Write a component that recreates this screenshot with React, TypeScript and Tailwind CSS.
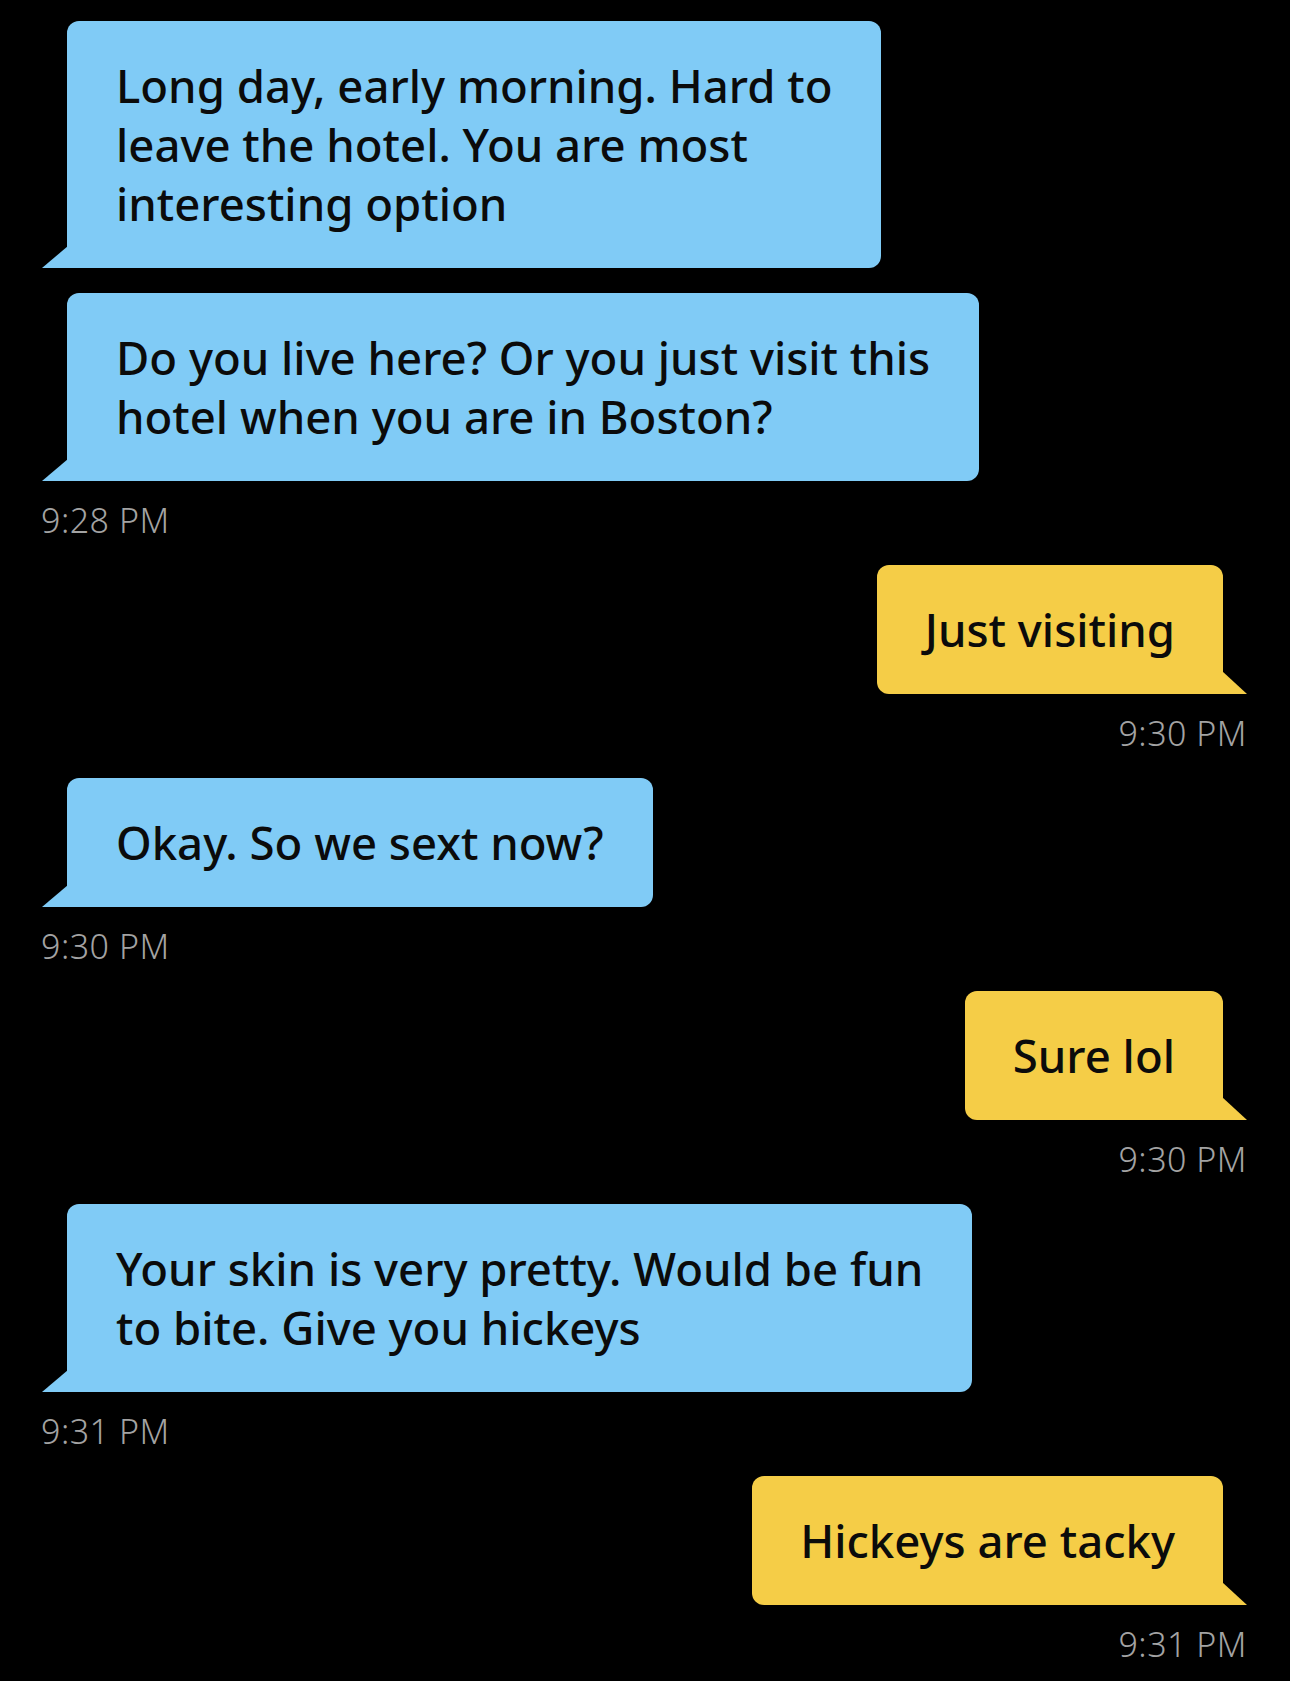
import React from "react";

type Msg = { from: "them" | "me"; lines: string[] };
type Group = { from: "them" | "me"; messages: string[][]; time: string };

const groups: Group[] = [
  {
    from: "them",
    messages: [
      [
        "Long day, early morning. Hard to",
        "leave the hotel. You are most",
        "interesting option",
      ],
      ["Do you live here? Or you just visit this", "hotel when you are in Boston?"],
    ],
    time: "9:28 PM",
  },
  { from: "me", messages: [["Just visiting"]], time: "9:30 PM" },
  { from: "them", messages: [["Okay. So we sext now?"]], time: "9:30 PM" },
  { from: "me", messages: [["Sure lol"]], time: "9:30 PM" },
  {
    from: "them",
    messages: [["Your skin is very pretty. Would be fun", "to bite. Give you hickeys"]],
    time: "9:31 PM",
  },
  { from: "me", messages: [["Hickeys are tacky"]], time: "9:31 PM" },
];

const Tail = ({ side }: { side: "them" | "me" }) =>
  side === "them" ? (
    <svg
      className="absolute bottom-0 -left-[25px] h-[22px] w-[26px]"
      viewBox="0 0 26 22"
    >
      <polygon points="26,0 26,22 0,22" fill="#80cbf6" />
    </svg>
  ) : (
    <svg
      className="absolute bottom-0 -right-[24px] h-[23px] w-[25px]"
      viewBox="0 0 25 23"
    >
      <polygon points="0,0 0,23 25,23" fill="#f5cd47" />
    </svg>
  );

const Bubble = ({ from, lines }: Msg) => {
  const them = from === "them";
  return (
    <div
      className={
        them
          ? "relative ml-[26px] w-fit rounded-[12px] rounded-bl-none bg-[#80cbf6] px-[49px] py-[35px]"
          : "relative mr-[24px] ml-auto w-fit rounded-[12px] rounded-br-none bg-[#f5cd47] px-[48px] py-[35px]"
      }
    >
      {lines.map((l, i) => (
        <p
          key={i}
          className="text-[45.5px] leading-[59px] font-medium whitespace-nowrap text-[#0b0b0b]"
        >
          {l}
        </p>
      ))}
      <Tail side={from} />
    </div>
  );
};

export default function App() {
  return (
    <div
      className="min-h-screen w-full bg-black pt-[21px] pr-[43px] pb-[20px] pl-[41px]"
      style={{ fontFamily: '"Noto Sans", "Open Sans", sans-serif' }}
    >
      <div className="flex flex-col gap-[25px]">
        {groups.map((g, i) => (
          <div key={i} className="flex flex-col">
            <div className="flex flex-col gap-[25px]">
              {g.messages.map((m, j) => (
                <Bubble key={j} from={g.from} lines={m} />
              ))}
            </div>
            <div
              className={
                g.from === "them"
                  ? "mt-[19px] text-left text-[34px] leading-[40px] font-light tracking-[0.5px] text-[#a3a3a3]"
                  : "mt-[19px] text-right text-[34px] leading-[40px] font-light tracking-[0.5px] text-[#a3a3a3]"
              }
            >
              {g.time}
            </div>
          </div>
        ))}
      </div>
    </div>
  );
}
